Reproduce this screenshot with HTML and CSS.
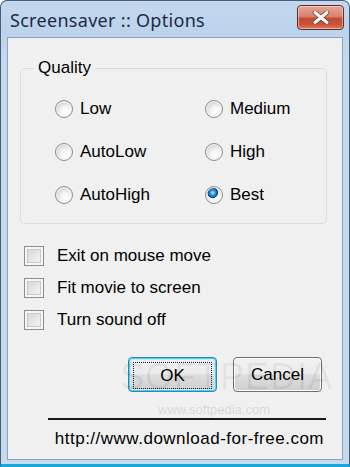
FILE: index.html
```html
<!DOCTYPE html>
<html lang="en">
  <head>
    <meta charset="UTF-8" />
    <title>Screensaver :: Options</title>
    <link rel="stylesheet" href="styles.css">
  </head>
  <body>
    <div class="window">
      <div class="titlebar">
        <span class="title">Screensaver :: Options</span>
        <button class="close-btn" title="Close">
          <svg width="18" height="13" viewBox="0 0 18 13">
            <path d="M3 1.5 L15 11.5 M15 1.5 L3 11.5" stroke="#6d3a3a" stroke-width="4.6" stroke-linecap="round" />
            <path d="M3 1.5 L15 11.5 M15 1.5 L3 11.5" stroke="#ffffff" stroke-width="3" stroke-linecap="round" />
          </svg>
        </button>
      </div>

      <div class="client">
        <fieldset class="group">
          <legend>Quality</legend>
          <div class="radios">
            <label class="option"><input type="radio" name="quality" /> Low</label>
            <label class="option"><input type="radio" name="quality" /> Medium</label>
            <label class="option"><input type="radio" name="quality" /> AutoLow</label>
            <label class="option"><input type="radio" name="quality" /> High</label>
            <label class="option"><input type="radio" name="quality" /> AutoHigh</label>
            <label class="option"><input type="radio" name="quality" checked /> Best</label>
          </div>
        </fieldset>

        <div class="checks">
          <label class="option"><input type="checkbox" /> Exit on mouse move</label>
          <label class="option"><input type="checkbox" /> Fit movie to screen</label>
          <label class="option"><input type="checkbox" /> Turn sound off</label>
        </div>

        <div class="buttons">
          <button class="btn btn-default"><span class="focus">OK</span></button>
          <button class="btn">Cancel</button>
        </div>

        <div class="footer">
          <hr class="rule" />
          <div class="url">http://www.download-for-free.com</div>
        </div>

        <div class="watermark">SOFTPEDIA</div>
        <div class="watermark-url">www.softpedia.com</div>
      </div>
    </div>
  </body>
</html>
```

FILE: styles.css
```css
body {
  margin: 0;
  width: 350px;
  height: 467px;
  overflow: hidden;
  background: #ffffff;
  font-family: "Liberation Sans", Arial, sans-serif;
}
.window {
  box-sizing: border-box;
  height: 467px;
  display: flex;
  flex-direction: column;
  padding: 0 6px 4px 6px;
  border: 1px solid #4a5d74;
  border-bottom: 3px solid #1aa6dc;
  border-radius: 7px 7px 0 0;
  background: linear-gradient(to bottom, #c3d8ee 0px, #bcd3ec 30px, #c6daef 60px, #c6daef);
}
.titlebar {
  height: 36px;
  display: flex;
  align-items: center;
  justify-content: space-between;
  flex-shrink: 0;
}
.title {
  font-family: "Noto Sans", sans-serif;
  font-size: 18px;
  letter-spacing: 0.3px;
  color: #1c2a44;
  padding-left: 3px;
  margin-top: 1px;
}
.close-btn {
  width: 47px;
  height: 25px;
  margin-top: -3px;
  margin-right: -1px;
  padding: 0;
  border: 1px solid #5c2c2c;
  border-radius: 4px;
  background: linear-gradient(to bottom, #e8a597 0%, #d9826e 45%, #c24b32 55%, #c9543a 80%, #e07a5c 100%);
  box-shadow: inset 0 0 0 1px rgba(255, 255, 255, 0.45);
  display: flex;
  align-items: center;
  justify-content: center;
}
.client {
  position: relative;
  flex: 1;
  overflow: hidden;
  background: #f0f0f0;
  border: 1px solid #8ea3ba;
  padding: 20px 14px 0 12px;
  font-size: 17px;
  color: #000000;
}
.group {
  margin: 0;
  width: 307px;
  box-sizing: border-box;
  border: 1px solid #d3dde4;
  border-radius: 5px;
  padding: 9px 0 7px 0;
}
.group legend {
  margin-left: 13px;
  padding: 0 4px;
  line-height: 20px;
}
.radios {
  display: grid;
  grid-template-columns: 150px 1fr;
  grid-auto-rows: 43px;
  padding-left: 34px;
}
.option {
  display: flex;
  align-items: center;
  gap: 7px;
}
.option input[type="radio"] {
  appearance: none;
  margin: 0;
  width: 18px;
  height: 18px;
  border-radius: 50%;
  border: 1px solid #8c8c8c;
  background: radial-gradient(circle at 60% 65%, #ffffff 0%, #f4f4f4 35%, #cfcfcf 75%, #bdbdbd 100%);
  box-shadow: inset 0 0 0 1px #fbfbfb;
}
.option input[type="radio"]:checked {
  background:
    radial-gradient(circle at 42% 36%, #bff0ff 0px, #3ea6e8 2px, #1569b4 4px, #0b3f78 5px, transparent 5.5px),
    radial-gradient(circle at 60% 65%, #ffffff 0%, #f4f4f4 35%, #cfcfcf 75%, #bdbdbd 100%);
}
.checks {
  display: flex;
  flex-direction: column;
  margin-top: 16px;
  margin-left: 4px;
}
.checks .option {
  height: 32px;
  gap: 13px;
}
.option input[type="checkbox"] {
  appearance: none;
  margin: 0;
  width: 20px;
  height: 20px;
  border: 1px solid #8e8e8e;
  box-sizing: border-box;
  background: linear-gradient(135deg, #cfcfcf 0%, #e6e6e6 50%, #fbfbfb 100%);
  box-shadow: inset 0 0 0 2px #f6f6f6, inset 0 0 0 3px #c9c9c9;
}
.buttons {
  display: flex;
  justify-content: flex-end;
  gap: 16px;
  margin-top: 21px;
  margin-right: 6px;
}
.btn {
  width: 89px;
  height: 35px;
  font-family: "Liberation Sans", Arial, sans-serif;
  font-size: 17px;
  color: #000000;
  border: 1px solid #707070;
  border-radius: 4px;
  background: linear-gradient(to bottom, #f2f2f2 0%, #ebebeb 48%, #dddddd 52%, #cfcfcf 100%);
  box-shadow: inset 0 0 0 1px #fcfcfc;
  padding: 0;
}
.btn-default {
  border-color: #3c7fb1;
  box-shadow: inset 0 0 0 1px #48d4f8, inset 0 0 0 2px #c3ecfa;
  padding: 4px;
}
.btn-default .focus {
  display: flex;
  align-items: center;
  justify-content: center;
  height: 100%;
  border: 1px dotted #222222;
}
.footer {
  margin-top: 26px;
  margin-left: 28px;
  margin-right: 2px;
}
.rule {
  margin: 0;
  border: none;
  border-top: 2px solid #1a1a1a;
}
.url {
  margin-top: 9px;
  line-height: 20px;
  letter-spacing: 0.5px;
  text-align: right;
  padding-right: 2px;
}
.watermark {
  position: absolute;
  left: 112px;
  top: 318px;
  font-size: 36px;
  letter-spacing: 1px;
  color: rgba(0, 0, 0, 0.06);
  pointer-events: none;
}
.watermark-url {
  position: absolute;
  left: 150px;
  top: 364px;
  font-size: 13px;
  color: rgba(0, 0, 0, 0.12);
  pointer-events: none;
}
```
